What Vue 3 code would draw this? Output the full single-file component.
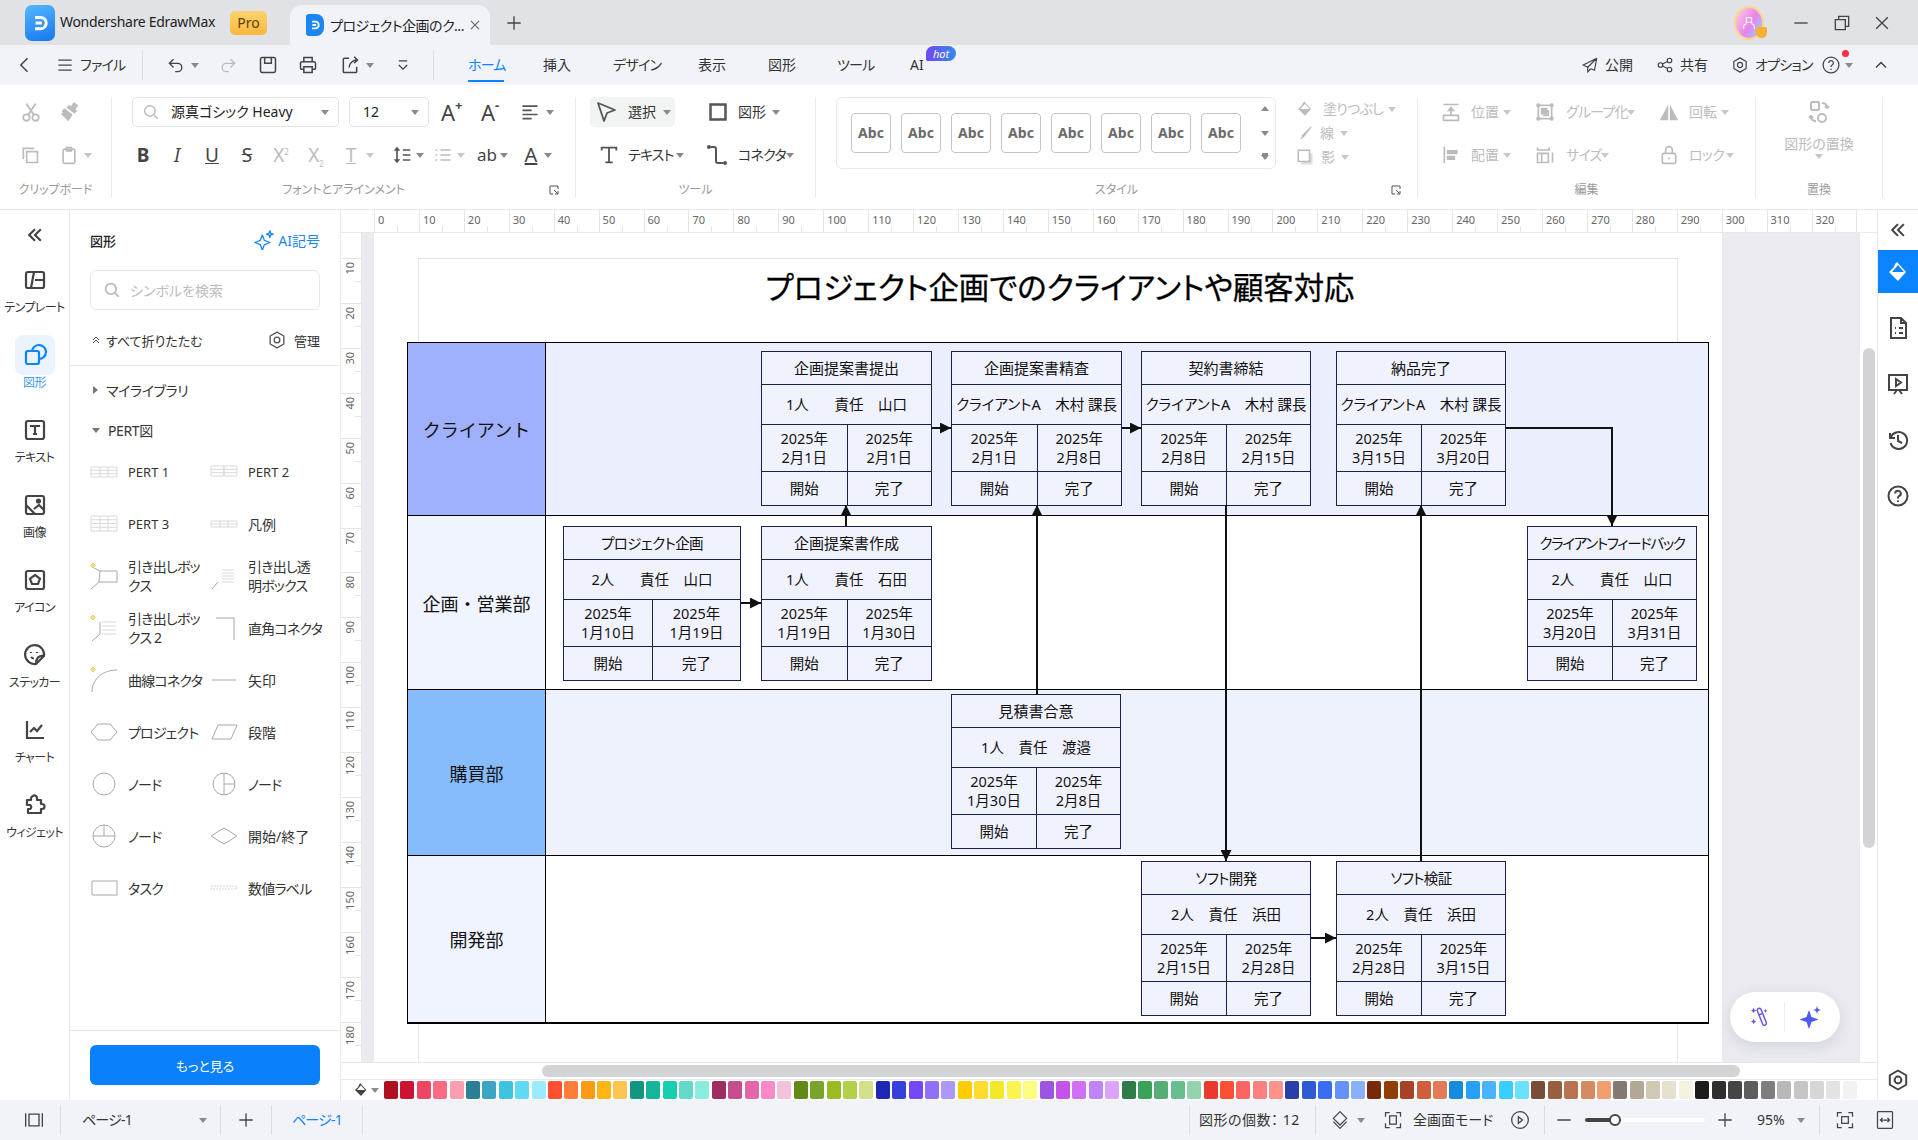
<script setup>
import { h } from 'vue'

// inner markup for the line icons, all on a 24 grid unless a vb is passed
const icons = {
  back: '<path d="M15 4l-8 8 8 8"/>',
  menu: '<path d="M4 6h16M4 12h16M4 18h16"/>',
  undo: '<path d="M9 5L4 10l5 5M4 10h10a5 5 0 0 1 0 10h-3"/>',
  redo: '<path d="M15 5l5 5-5 5M20 10H10a5 5 0 0 0 0 10h3"/>',
  save: '<rect x="3" y="3" width="18" height="18" rx="2"/><path d="M8 3v7h8V3"/>',
  print: '<path d="M7 8V3h10v5M7 17H4a1 1 0 0 1-1-1v-6a2 2 0 0 1 2-2h14a2 2 0 0 1 2 2v6a1 1 0 0 1-1 1h-3M7 14h10v7H7z"/>',
  exp: '<path d="M11 4H5a1 1 0 0 0-1 1v15a1 1 0 0 0 1 1h14a1 1 0 0 0 1-1v-6M11 15c0-5 4-9 10-9M17 2l4 4-4 4"/>',
  more: '<path d="M7 7h10M7 12l5 5 5-5"/>',
  send: '<path d="M21 3L3 12l6 3zM21 3L9 15v6l4-4M21 3l-3 16-5-2"/>',
  share: '<circle cx="6" cy="12" r="3"/><circle cx="18" cy="6" r="3"/><circle cx="18" cy="18" r="3"/><path d="M8.7 10.7l6.6-3.4M8.7 13.3l6.6 3.4"/>',
  gear: '<path stroke-linejoin="round" d="M12 2.5l8.2 4.75v9.5L12 21.5l-8.2-4.75v-9.5z"/><circle cx="12" cy="12" r="3.4"/>',
  help: '<circle cx="12" cy="12" r="9.5"/><path d="M9.2 9.5a2.8 2.8 0 1 1 4.2 2.4c-.9.5-1.4 1-1.4 2v.6M12 16.5v1.5"/>',
  up: '<path d="M6 15l6-6 6 6"/>',
  min: '<path d="M4 12h16"/>',
  restore: '<path d="M8 8V4h12v12h-4M4 8h12v12H4z"/>',
  close: '<path d="M5 5l14 14M19 5L5 19"/>',
  plus: '<path d="M12 4v16M4 12h16"/>',
  cut: '<circle cx="7" cy="18" r="3.5"/><circle cx="17" cy="18" r="3.5"/><path d="M9 15L17 3M15 15L7 3"/>',
  brush: '<path fill="currentColor" stroke="none" d="M16 1l5 4-3 4 2 2-3 3-9-7 3-3 2 2zM6 8l9 7-5 7-8-8 2-1-1-2z"/>',
  copy: '<path d="M8 8h13v13H8zM4 17V4h13"/>',
  paste: '<rect x="5" y="5" width="14" height="17" rx="2"/><path d="M9 3h6v4H9z"/>',
  search: '<circle cx="10.5" cy="10.5" r="7"/><path d="M16 16l5 5"/>',
  align: '<path d="M3 5h18M3 10h11M3 15h18M3 20h11"/>',
  spacing: '<path fill="currentColor" stroke="none" d="M6 2l4 5H2zM6 22l-4-5h8z"/><path d="M6 6v12M13 6h9M13 12h9M13 18h9"/>',
  bullets: '<path d="M9 6h12M9 12h12M9 18h12M3 6h2M3 12h2M3 18h2"/>',
  pointer: '<path stroke-linejoin="round" d="M4 3l17 7-8 3-3 8z"/>',
  rect: '<path d="M3 3h18v18H3z"/>',
  ttext: '<path d="M4 7V4h16v3M12 4v16M8 20h8"/>',
  conn: '<path d="M6 4h3a2 2 0 0 1 2 2v12a2 2 0 0 0 2 2h5"/><circle cx="4" cy="4" r="2" fill="currentColor" stroke="none"/><circle cx="20" cy="20" r="2" fill="currentColor" stroke="none"/>',
  fill: '<path fill="currentColor" stroke="none" d="M11 2l9 10-8 9-9-9 5-5 1-3zM6 12h12l-6-7z"/>',
  pen: '<path fill="currentColor" stroke="none" d="M20 3l1 1-10 13-5 4 2-6z"/>',
  shadow: '<path fill="currentColor" opacity=".5" stroke="none" d="M7 7h15v15H7z"/><path fill="#fff" d="M3 3h15v15H3z"/>',
  pos: '<path d="M3 3h18M3 16h18v6H3zM12 17V7"/><path fill="currentColor" stroke="none" d="M12 5l5 6H7z"/>',
  group: '<rect x="4" y="4" width="16" height="16"/><rect x="8" y="8" width="6" height="6" fill="currentColor"/><rect x="11" y="11" width="5" height="5"/><g fill="currentColor" stroke="none"><circle cx="4" cy="4" r="2.5"/><circle cx="20" cy="4" r="2.5"/><circle cx="4" cy="20" r="2.5"/><circle cx="20" cy="20" r="2.5"/></g>',
  rotate: '<path fill="currentColor" stroke="none" d="M11 3L1 22h10zM13 3l10 19H13z"/>',
  alignl: '<path d="M4 2v20"/><path fill="currentColor" stroke="none" d="M7 6h13v5H7zM7 13h10v5H7z"/>',
  size: '<path d="M3 3v3h14V3M3 10h13v11H3zM8 10v11M21 9v12"/>',
  lock: '<rect x="4" y="10" width="16" height="12" rx="2"/><path d="M8 10V6a4 4 0 0 1 8 0v4"/><path d="M12 15v2"/>',
  replace: '<rect x="4" y="2" width="8" height="8" rx="1"/><circle cx="15" cy="18" r="4"/><path d="M15 3c3 0 5 2 5 5M18 6l2 2 2-2M9 21c-3 0-5-2-5-5M2 18l2-2 2 2"/>',
  launch: '<path d="M10 20H4V4h16v6M12 12l8 8M20 14v6h-6"/>',
  dchev: '<path d="M12 5l-7 7 7 7M19 5l-7 7 7 7"/>',
  dup: '<path d="M6 12l6-6 6 6M6 18l6-6 6 6"/>',
  tpl: '<rect x="3" y="4" width="18" height="16" rx="2"/><path d="M11 4L8 20M12 12h9"/>',
  shapes: '<path d="M9 8a7 7 0 1 1 7 8"/><rect x="3" y="8" width="13" height="13" rx="2"/>',
  textbox: '<rect x="3" y="3" width="18" height="18" rx="2"/><path d="M8 9V8h8v1M12 8v8M10 16h4"/>',
  image: '<rect x="3" y="3" width="18" height="18" rx="2"/><path d="M3 12l9 9M11 16l5-4 5 5"/><circle cx="15.5" cy="8" r="1.5" fill="currentColor"/>',
  iconbox: '<rect x="3" y="3" width="18" height="18" rx="2"/><path d="M12 7l5 3.6-2 5.4H9l-2-5.4z"/>',
  sticker: '<path d="M21 13a9.5 9.5 0 1 0-8 8zM21 13c-5-1-8 2-8 8"/><path d="M8 9v1M14 9v1M8 14c1 1 2 1.500 3 1.500"/>',
  chart: '<path d="M4 3v17h17M7 14l4-4 3 3 5-6"/>',
  puzzle: '<path stroke-linejoin="round" d="M10 3a2.500 2.500 0 0 1 4 2v2h4v4h1a2.500 2.500 0 0 1 0 5h-1v4H5v-4h2a2.200 2.200 0 0 0 0-4H4V7h4V5a3 3 0 0 1 2-2z"/>',
  doc: '<path d="M5 2h10l5 5v15H5zM15 2v5h5M9 12h1M13 12h4M9 17h1M13 17h4"/>',
  present: '<path d="M3 3h18v15H3zM2 3h20M8 22l3-4M16 22l-3-4M10 7l5 3.500-5 3.500z"/>',
  history: '<path d="M4 5v5h5M4.500 10a8.500 8.500 0 1 1 0 5M12 7v6l4 2"/>',
  star: '<path fill="currentColor" stroke="none" d="M11 5l2.500 7 7 2.500-7 2.500L11 24l-2.500-7-7-2.500 7-2.500zM19 1l1 3 3 1-3 1-1 3-1-3-3-1 3-1z"/>',
  staro: '<path stroke-linejoin="round" d="M10 6l2.500 6.500L19 15l-6.500 2.500L10 24l-2.500-6.500L1 15l6.500-2.500zM19 1l1 3 3 1-3 1-1 3-1-3-3-1 3-1z"/>',
  wand: '<path d="M9 5l6 15a2.200 2.200 0 0 0 4-1.500L13 3.500A2.200 2.200 0 0 0 9 5zM10 10l4-1.500"/><path fill="currentColor" stroke="none" d="M5 2l1 2 2 1-2 1-1 2-1-2-2-1 2-1zM5 14l1 2 2 1-2 1-1 2-1-2-2-1 2-1zM18 3l.7 1.500 1.500.7-1.500.7-.7 1.500-.7-1.500-1.500-.7 1.500-.7z"/>',
  panels: '<path d="M2 4v16M22 4v16M6 5h12v14H6z"/>',
  layers: '<path stroke-linejoin="round" d="M12 2l8 8-8 8-8-8zM4 14l8 8 8-8"/>',
  full: '<path d="M3 8V3h5M16 3h5v5M21 16v5h-5M8 21H3v-5"/><rect x="8" y="7" width="8" height="10"/>',
  play: '<circle cx="12" cy="12" r="10"/><path d="M10 8l5 4-5 4z"/>',
  fit: '<path d="M3 8V3h5M16 3h5v5M21 16v5h-5M8 21H3v-5"/><rect x="8" y="8" width="8" height="8"/>',
  width: '<rect x="3" y="2" width="18" height="20" rx="1"/><path d="M7 12h10M9 9.500L6.500 12 9 14.500M15 9.500l2.500 2.500-2.500 2.500"/>',
  person: '<path stroke="#fff" stroke-width="1.600" d="M8 4h8v7H8zM4 21v-3c0-3 2-5 5-5M20 21v-3c0-3-2-5-5-5"/>',
  logo: '<path stroke="#fff" stroke-width="2.400" d="M8 7.500h4.500a4.500 4.500 0 0 1 0 9H8M8.500 12h5"/>'
}

// thumbnails of the shape library, 28 grid
const G1 = '#d9d9d9'
const G2 = '#a8a8a8'
const table = (y1, y2, rows, c) => {
  let d = `M1 ${y1}h26v${y2 - y1}H1z`
  for (let i = 1; i < rows; i++) d += `M1 ${y1 + ((y2 - y1) * i) / rows}h26`
  d += `M${c} ${y1}v${y2 - y1}M${28 - c} ${y1}v${y2 - y1}`
  return `<path stroke="${G1}" d="${d}"/>`
}
const dia = '<path fill="#f6e27a" stroke="#ccb84a" stroke-width=".6" d="M3 1l2.500 2.500L3 6 .5 3.500z"/>'
const thumbs = {
  p1: table(9, 19, 3, 10),
  p2: table(8, 18, 3, 14),
  p3: table(6, 21, 4, 10),
  leg: table(11, 17, 2, 10),
  call: dia + `<path stroke="${G2}" d="M10 9h17v11H9zM9 20l-8 7M10 9l-6-3"/>`,
  callt: `<path stroke="${G1}" d="M12 8h12M12 11h12M12 14h12M12 17h12M12 20h12"/><path stroke="${G2}" d="M8 20l-6 7"/>`,
  call2: dia + `<path stroke="${G1}" d="M12 8h14M12 12h14M12 16h14M12 20h14"/><path stroke="${G2}" d="M10 8v12M10 20l-8 7"/>`,
  right: `<path stroke="${G2}" d="M6 4h18v22"/>`,
  curve: dia + `<path stroke="${G2}" d="M27 4C14 4 2 12 2 26"/>`,
  arrow: `<path stroke="${G2}" d="M2 14h24"/>`,
  hex: `<path stroke="${G2}" d="M8 6h12l7 8-7 8H8l-7-8z"/>`,
  para: `<path stroke="${G2}" d="M8 7h19l-6 14H2z"/>`,
  node: `<circle stroke="${G2}" cx="14" cy="14" r="11"/>`,
  node2: `<circle stroke="${G2}" cx="14" cy="14" r="11"/><path stroke="${G2}" d="M14 3v22M14 14h11"/>`,
  node3: `<circle stroke="${G2}" cx="14" cy="14" r="11"/><path stroke="${G2}" d="M3 14h22M14 3v11"/>`,
  dmd: `<path stroke="${G2}" d="M14 6l13 8-13 8-13-8z"/>`,
  task: `<path stroke="${G2}" d="M2 7h25v14H2z"/>`,
  num: `<path stroke="${G1}" stroke-dasharray="2 1" d="M1 12h26v3H1z"/>`
}

const Ic = (props) =>
  h('svg', {
    class: 'ic',
    viewBox: props.vb || '0 0 24 24',
    fill: 'none',
    stroke: 'currentColor',
    'stroke-width': props.sw || 2,
    innerHTML: props.t ? thumbs[props.t] : icons[props.n],
  })
Ic.props = ['n', 't', 'vb', 'sw']

const leftRail = [
  { n: 'tpl', label: 'テンプレート' },
  { n: 'shapes', label: '図形', active: true },
  { n: 'textbox', label: 'テキスト' },
  { n: 'image', label: '画像' },
  { n: 'iconbox', label: 'アイコン' },
  { n: 'sticker', label: 'ステッカー' },
  { n: 'chart', label: 'チャート' },
  { n: 'puzzle', label: 'ウィジェット' },
]

const shapes = [
  { t: 'p1', label: 'PERT 1' },
  { t: 'p2', label: 'PERT 2' },
  { t: 'p3', label: 'PERT 3' },
  { t: 'leg', label: '凡例', big: true },
  { t: 'call', label: '引き出しボッ\nクス', big: true, k: true },
  { t: 'callt', label: '引き出し透\n明ボックス', big: true, k: true },
  { t: 'call2', label: '引き出しボッ\nクス 2', big: true, k: true },
  { t: 'right', label: '直角コネクタ', big: true, k: true },
  { t: 'curve', label: '曲線コネクタ', big: true, k: true },
  { t: 'arrow', label: '矢印', big: true },
  { t: 'hex', label: 'プロジェクト', big: true, k: true },
  { t: 'para', label: '段階', big: true },
  { t: 'node', label: 'ノード', big: true, k: true },
  { t: 'node2', label: 'ノード', big: true, k: true },
  { t: 'node3', label: 'ノード', big: true, k: true },
  { t: 'dmd', label: '開始/終了', big: true },
  { t: 'task', label: 'タスク', big: true, k: true },
  { t: 'num', label: '数値ラベル', big: true, k: true },
]

const rulerTop = Array.from({ length: 34 }, (_, i) => i * 10)
const rulerLeft = Array.from({ length: 19 }, (_, i) => (i + 1) * 10)

const palette = [
  '#ae1220', '#cc1233', '#ec4662', '#f96a85', '#fc9db0',
  '#2a7f96', '#3aa6c4', '#3ec3e0', '#5fdaf2', '#9cebfd',
  '#fc5030', '#ff7d3a', '#ff9a18', '#ffb615', '#ffc550',
  '#13967f', '#14b59a', '#18cdb0', '#64d9c7', '#88eddc',
  '#9e2d63', '#c84d8d', '#e468a8', '#f989c8', '#f5c2de',
  '#628815', '#78a42a', '#98bc22', '#b2d048', '#d2e08c',
  '#1e28b0', '#3840dc', '#7448f8', '#9070f8', '#ab98fa',
  '#fdcb00', '#fedb2e', '#f2ea28', '#fdf350', '#fdfd80',
  '#9c55e0', '#c454e8', '#d070f4', '#c084f8', '#dca4fc',
  '#2e7d48', '#3aa35a', '#55ae76', '#66bf8c', '#94d4ac',
  '#ea3a2e', '#fd4f34', '#fd6464', '#fd8080', '#fd938a',
  '#2840a8', '#2f5ad6', '#3a6ef2', '#6690fd', '#8ab0fa',
  '#78290a', '#913e05', '#a84224', '#d05f3e', '#e37b58',
  '#158bdc', '#28a0f5', '#4ab2ff', '#3acdff', '#68e2ff',
  '#7a4e35', '#975f40', '#b87350', '#d68a62', '#f49e6e',
  '#857870', '#b3a797', '#cfc8b5', '#e6e0cf', '#f5f3df',
  '#1c1c1c', '#2f2f2f', '#454545', '#5d5d5d', '#7e7e7e',
  '#b8b8b8', '#c6c6c6', '#d6d6d6', '#e3e3e3', '#f2f2f2',
]

const lanes = [
  { name: 'クライアント', cls: 'l1' },
  { name: '企画・営業部', cls: 'l2' },
  { name: '購買部', cls: 'l3' },
  { name: '開発部', cls: 'l4' },
]

// diagram nodes, x/y in page pixels, the table's inner corner is 408,343
const nodes = [
  { x: 761, y: 351, w: 171, title: '企画提案書提出', who: '1人　   責任　山口', a: '2025年\n2月1日', b: '2025年\n2月1日' },
  { x: 951, y: 351, w: 171, title: '企画提案書精査', who: 'クライアントA　木村 課長', a: '2025年\n2月1日', b: '2025年\n2月8日' },
  { x: 1141, y: 351, w: 170, title: '契約書締結', who: 'クライアントA　木村 課長', a: '2025年\n2月8日', b: '2025年\n2月15日' },
  { x: 1336, y: 351, w: 170, title: '納品完了', who: 'クライアントA　木村 課長', a: '2025年\n3月15日', b: '2025年\n3月20日' },
  { x: 563, y: 526, w: 178, title: 'プロジェクト企画', cls: 'tt1', who: '2人　   責任　山口', a: '2025年\n1月10日', b: '2025年\n1月19日' },
  { x: 761, y: 526, w: 171, title: '企画提案書作成', who: '1人　   責任　石田', a: '2025年\n1月19日', b: '2025年\n1月30日' },
  { x: 1527, y: 526, w: 170, title: 'クライアントフィードバック', cls: 'tt2', who: '2人　   責任　山口', a: '2025年\n3月20日', b: '2025年\n3月31日' },
  { x: 951, y: 694, w: 170, title: '見積書合意', who: '1人　責任　渡邉', a: '2025年\n1月30日', b: '2025年\n2月8日' },
  { x: 1141, y: 861, w: 170, title: 'ソフト開発', cls: 'tt1', who: '2人　責任　浜田', a: '2025年\n2月15日', b: '2025年\n2月28日' },
  { x: 1336, y: 861, w: 170, title: 'ソフト検証', cls: 'tt1', who: '2人　責任　浜田', a: '2025年\n2月28日', b: '2025年\n3月15日' },
]

const links = [
  'M932 428H951',
  'M1122 428H1141',
  'M741 603H761',
  'M1311 938H1336',
  'M846 526V505',
  'M1037 694V505',
  'M1226 505V861',
  'M1421 861V505',
  'M1506 428H1612V526',
]
</script>

<template>
  <div class="app">
    <!-- title bar -->
    <header class="titlebar">
      <span class="logo m25"><Ic n="logo" /></span>
      <span class="t w160 m5 appname">Wondershare EdrawMax</span>
      <span class="pro m10">Pro</span>
      <div class="tab m23">
        <span class="tabicon"><Ic n="logo" /></span>
        <span class="tabtext">プロジェクト企画のク...</span>
        <Ic n="close" class="i14 tabx" />
      </div>
      <Ic n="plus" sw="1.600" class="i20 m14 dark" />
      <div class="winctl">
        <div class="avatar"><Ic n="person" class="i16" /><span class="avbadge"></span></div>
        <Ic n="min" sw="1.600" class="i20 m27 dark" />
        <Ic n="restore" sw="1.600" class="i20 m21 dark" />
        <Ic n="close" sw="1.600" class="i20 m20 dark" />
      </div>
    </header>

    <!-- quick access + menu tabs -->
    <nav class="toolbar">
      <Ic n="back" sw="1.800" class="i20 m15 dark" />
      <Ic n="menu" sw="1.500" class="i20 m20 dark" />
      <span class="t k w42 m5">ファイル</span>
      <i class="vline m20"></i>
      <Ic n="undo" sw="1.600" class="i20 m23 dark" />
      <i class="ar m5"></i>
      <Ic n="redo" sw="1.600" class="i20 m19 off" />
      <Ic n="save" sw="1.800" class="i20 m20 dark" />
      <Ic n="print" sw="1.800" class="i20 m20 dark" />
      <Ic n="exp" sw="1.800" class="i20 m22 dark" />
      <i class="ar m6"></i>
      <Ic n="more" sw="1.600" class="i20 m19 dark" />
      <i class="vline m20"></i>
      <span class="t k w34 m34 menu active">ホーム</span>
      <span class="t w29 m41">挿入</span>
      <span class="t k w45 m41">デザイン</span>
      <span class="t w29 m40">表示</span>
      <span class="t w29 m41">図形</span>
      <span class="t k w33 m40">ツール</span>
      <span class="t w13 m40 ai">AI<b class="hot">hot</b></span>
      <div class="tbright">
        <Ic n="send" sw="1.600" class="i18 dark" />
        <span class="t w28 m6">公開</span>
        <Ic n="share" sw="1.600" class="i18 m23 dark" />
        <span class="t w28 m6">共有</span>
        <Ic n="gear" sw="1.600" class="i18 m23 dark" />
        <span class="t k w52 m6">オプション</span>
        <span class="helpwrap m14"><Ic n="help" sw="1.500" class="i20 dark" /><b class="reddot"></b></span>
        <i class="ar m4"></i>
        <Ic n="up" sw="1.800" class="i20 m18 dark" />
      </div>
    </nav>

    <!-- ribbon -->
    <section class="ribbon">
      <div class="grp g1">
        <div class="row off">
          <Ic n="cut" class="i22 m20" />
          <Ic n="brush" class="i22 m17" />
        </div>
        <div class="row off">
          <Ic n="copy" class="i20 m20" />
          <Ic n="paste" class="i20 m19" />
          <i class="ar lt m5"></i>
        </div>
        <div class="glabel">クリップボード</div>
      </div>

      <div class="grp g2">
        <div class="row">
          <div class="select fontsel m20">
            <Ic n="search" class="i18 off" />
            <span class="t m11">源真ゴシック Heavy</span>
            <i class="ar push"></i>
          </div>
          <div class="select sizesel m10"><span class="t">12</span><i class="ar push"></i></div>
          <span class="glyph w20 m12">A<sup>+</sup></span>
          <span class="glyph w20 m20">A<sup>-</sup></span>
          <Ic n="align" class="i20 m19 mid" />
          <i class="ar m6"></i>
        </div>
        <div class="row">
          <b class="fmt m21">B</b>
          <i class="fmt m14">I</i>
          <u class="fmt m15">U</u>
          <s class="fmt m15">S</s>
          <span class="fmt off m14">X<sup>2</sup></span>
          <span class="fmt off m15">X<sub>2</sub></span>
          <span class="fmt off m15 ttt">T</span>
          <i class="ar lt m5"></i>
          <Ic n="spacing" class="i20 m18 mid" />
          <i class="ar m4"></i>
          <Ic n="bullets" class="i20 m9 off" />
          <i class="ar lt m4"></i>
          <span class="fmt w22 m12 ab">ab</span>
          <i class="ar m3"></i>
          <span class="fmt m13 ul">A</span>
          <i class="ar m3"></i>
        </div>
        <div class="glabel">フォントとアラインメント<Ic n="launch" class="i12 launch" /></div>
      </div>

      <div class="grp g3">
        <div class="row">
          <div class="selbtn m14">
            <Ic n="pointer" sw="1.800" class="i24 mid" />
            <span class="t w30 m10">選択</span>
            <i class="ar m5"></i>
          </div>
          <Ic n="rect" sw="3" class="i20 m33 mid" />
          <span class="t w30 m10">図形</span>
          <i class="ar m4"></i>
        </div>
        <div class="row">
          <Ic n="ttext" class="i22 m22 mid" />
          <span class="t k w44 m8">テキスト</span>
          <i class="ar m4"></i>
          <Ic n="conn" class="i24 m21 mid" />
          <span class="t k w44 m9">コネクタ</span>
          <i class="ar m4"></i>
        </div>
        <div class="glabel">ツール</div>
      </div>

      <div class="grp g4">
        <div class="stylerow">
          <div class="stylebox m20">
            <span v-for="n in 8" :key="n" class="abc">Abc</span>
            <div class="stylearrows">
              <i class="ar upw"></i><i class="ar"></i><i class="ar dbl"></i>
            </div>
          </div>
          <div class="fills off">
            <div class="fillrow"><Ic n="fill" class="i18" /><span class="t k w59 m9">塗りつぶし</span><i class="ar lt m6"></i></div>
            <div class="fillrow"><Ic n="pen" class="i18" /><span class="t w14 m6">線</span><i class="ar lt m6"></i></div>
            <div class="fillrow"><Ic n="shadow" class="i18" /><span class="t w14 m7">影</span><i class="ar lt m6"></i></div>
          </div>
        </div>
        <div class="glabel">スタイル<Ic n="launch" class="i12 launch" /></div>
      </div>

      <div class="grp g5">
        <div class="row off">
          <Ic n="pos" class="i20 m23" />
          <span class="t w29 m10">位置</span><i class="ar lt m3"></i>
          <Ic n="group" class="i20 m24" />
          <span class="t k w56 m11">グループ化</span><i class="ar lt m5"></i>
          <Ic n="rotate" class="i20 m24" />
          <span class="t w28 m10">回転</span><i class="ar lt m4"></i>
        </div>
        <div class="row off">
          <Ic n="alignl" class="i20 m23" />
          <span class="t w29 m10">配置</span><i class="ar lt m3"></i>
          <Ic n="size" class="i20 m24" />
          <span class="t k w32 m11">サイズ</span><i class="ar lt m3"></i>
          <Ic n="lock" class="i20 m50" />
          <span class="t k w24 m10">ロック</span><i class="ar lt m13"></i>
        </div>
        <div class="glabel">編集</div>
      </div>

      <div class="grp g6">
        <div class="replace off">
          <Ic n="replace" class="i24" />
          <span class="t">図形の置換</span>
          <i class="ar lt"></i>
        </div>
        <div class="glabel">置換</div>
      </div>
    </section>

    <div class="main">
      <!-- left icon rail -->
      <aside class="rail">
        <div class="railtop"><Ic n="dchev" sw="2.600" class="i20 railicon" /></div>
        <div v-for="item in leftRail" :key="item.label" class="railitem" :class="{ on: item.active }">
          <span class="railbox"><Ic :n="item.n" sw="2.200" class="i24" /></span>
          <span class="raillabel">{{ item.label }}</span>
        </div>
      </aside>

      <!-- shape library -->
      <aside class="panel">
        <div class="panelhead">
          <b class="paneltitle">図形</b>
          <span class="aibtn"><Ic n="staro" sw="1.600" class="i20" />AI記号</span>
        </div>
        <div class="searchbox"><Ic n="search" sw="2.400" class="i18" /><span>シンボルを検索</span></div>
        <div class="collapse">
          <Ic n="dup" class="i12" />
          <span class="m4">すべて折りたたむ</span>
          <span class="manage"><Ic n="gear" sw="1.600" class="i20" /><span class="m7">管理</span></span>
        </div>
        <div class="library">
          <div class="libhead"><i class="tri right"></i>マイライブラリ</div>
          <div class="libhead"><i class="tri"></i>PERT図</div>
          <div class="shapegrid">
            <div v-for="s in shapes" :key="s.t" class="shape">
              <Ic :t="s.t" vb="0 0 28 28" sw="1" class="i28" />
              <span class="shapelabel" :class="{ big: s.big, k: s.k }">{{ s.label }}</span>
            </div>
          </div>
        </div>
        <div class="panelfoot"><button class="morebtn">もっと見る</button></div>
      </aside>

      <div class="work">
        <div class="rulertop">
          <div class="rulercorner"></div>
          <div class="ticks">
            <span v-for="n in rulerTop" :key="n" class="tick">{{ n < 330 ? n : '' }}</span>
          </div>
        </div>

        <div class="middle">
          <div class="rulerleft">
            <span v-for="n in rulerLeft" :key="n" class="ltick"><em v-if="n < 190">{{ n }}</em></span>
          </div>

          <div class="canvas">
            <div class="page">
              <div class="frame">
                <h1 class="doctitle">プロジェクト企画でのクライアントや顧客対応</h1>
              </div>

              <div class="tbl">
                <div v-for="lane in lanes" :key="lane.name" class="lane" :class="lane.cls">
                  <div class="lanename">{{ lane.name }}</div>
                  <div class="lanebody"></div>
                </div>

                <div
                  v-for="n in nodes"
                  :key="n.title"
                  class="node"
                  :style="{ left: n.x - 408 + 'px', top: n.y - 343 + 'px', width: n.w + 'px' }"
                >
                  <div class="ntitle" :class="n.cls">{{ n.title }}</div>
                  <div class="nwho">{{ n.who }}</div>
                  <div class="ngrid ndate">
                    <div>{{ n.a }}</div>
                    <div>{{ n.b }}</div>
                  </div>
                  <div class="ngrid nstat">
                    <div>開始</div>
                    <div>完了</div>
                  </div>
                </div>

                <svg class="links" viewBox="408 343 1300 680">
                  <defs>
                    <marker id="ah" viewBox="0 0 10 10" refX="10" refY="5" markerWidth="11" markerHeight="11" markerUnits="userSpaceOnUse" orient="auto">
                      <path d="M0 0L10 5L0 10z" fill="#111" />
                    </marker>
                  </defs>
                  <path v-for="d in links" :key="d" :d="d" fill="none" stroke="#111" stroke-width="2" marker-end="url(#ah)" />
                </svg>
              </div>
            </div>

            <div class="aipill">
              <Ic n="wand" sw="1.600" class="i22 violet" />
              <i class="pilldiv"></i>
              <Ic n="star" class="i24 violet2" />
            </div>
          </div>

          <div class="vscroll"><span class="vthumb"></span></div>
        </div>

        <div class="hscroll"><span class="hthumb"></span></div>

        <div class="palette">
          <span class="palfill"><Ic n="fill" class="i16" /><i class="ar"></i></span>
          <span v-for="(c, i) in palette" :key="i" class="swatch" :style="{ background: c }"></span>
        </div>
      </div>

      <!-- right rail -->
      <aside class="rrail">
        <div class="rtop"><Ic n="dchev" sw="2.400" class="i20" /></div>
        <div class="ractive"><Ic n="fill" class="i24" /></div>
        <div class="ritem"><Ic n="doc" class="i24" /></div>
        <div class="ritem"><Ic n="present" class="i24" /></div>
        <div class="ritem"><Ic n="history" class="i24" /></div>
        <div class="ritem"><Ic n="help" class="i24" /></div>
        <div class="rgear"><Ic n="gear" class="i24" /></div>
      </aside>
    </div>

    <!-- status bar -->
    <footer class="status">
      <Ic n="panels" sw="1.600" class="i20 m24 dark" />
      <i class="vline m16"></i>
      <span class="t k w116 m21">ページ-1</span>
      <i class="ar m1"></i>
      <i class="vline m13"></i>
      <Ic n="plus" sw="1.600" class="i20 m15 dark" />
      <i class="vline m15"></i>
      <span class="t k w50 m20 blue">ページ-1</span>
      <i class="vline m20"></i>
      <div class="stright">
        <i class="vline"></i>
        <span class="t w107 m9 count">図形の個数： 12</span>
        <i class="vline m9"></i>
        <Ic n="layers" sw="1.500" class="i20 m14 dark" />
        <i class="ar m7"></i>
        <Ic n="full" sw="1.500" class="i20 m18 dark" />
        <span class="t w82 m10">全画面モード</span>
        <Ic n="play" sw="1.500" class="i20 m15 dark" />
        <i class="vline m14"></i>
        <Ic n="min" sw="1.800" class="i20 m9 dark" />
        <div class="slider m11"><span class="sfill"></span><span class="sknob"></span></div>
        <Ic n="plus" sw="1.600" class="i20 m10 dark" />
        <span class="t w29 m22">95%</span>
        <i class="ar m11"></i>
        <i class="vline m14"></i>
        <Ic n="fit" sw="1.500" class="i20 m15 dark" />
        <Ic n="width" sw="1.500" class="i20 m20 dark" />
      </div>
    </footer>
  </div>
</template>

<style>
html,
body {
  margin: 0;
  background: #fff;
}
</style>

<style scoped>
.app {
  width: 1918px;
  height: 1140px;
  display: flex;
  flex-direction: column;
  overflow: hidden;
  font-family: "Noto Sans", "Noto Sans CJK JP", sans-serif;
  font-size: 13px;
  font-feature-settings: "palt";
  color: #333;
  background: #fff;
}

.ic { flex: none; display: block; }
.i12 { width: 12px; height: 12px; }
.i14 { width: 14px; height: 14px; }
.i16 { width: 16px; height: 16px; }
.i18 { width: 18px; height: 18px; }
.i20 { width: 20px; height: 20px; }
.i22 { width: 22px; height: 22px; }
.i24 { width: 24px; height: 24px; }
.i28 { width: 28px; height: 28px; }
.dark { color: #444; }
.mid { color: #555; }
.off { color: #bcbcbc; }
.blue { color: #0a84ff; }

.t { flex: none; white-space: nowrap; font-size: 14px; padding-bottom: 2px; }
.k { letter-spacing: -0.8px; }
.count { letter-spacing: 0.5px; }
.w13 { width: 13px; } .w14 { width: 14px; } .w20 { width: 20px; } .w22 { width: 22px; }
.w24 { width: 24px; } .w28 { width: 28px; } .w29 { width: 29px; } .w30 { width: 30px; }
.w32 { width: 32px; } .w33 { width: 33px; } .w34 { width: 34px; } .w42 { width: 42px; }
.w44 { width: 44px; } .w45 { width: 45px; } .w50 { width: 50px; } .w52 { width: 52px; }
.w56 { width: 56px; } .w59 { width: 59px; } .w82 { width: 82px; } .w107 { width: 107px; }
.w116 { width: 116px; } .w160 { width: 160px; }

.m1 { margin-left: 1px; } .m3 { margin-left: 3px; } .m4 { margin-left: 4px; } .m5 { margin-left: 5px; }
.m6 { margin-left: 6px; } .m7 { margin-left: 7px; } .m8 { margin-left: 8px; } .m9 { margin-left: 9px; }
.m10 { margin-left: 10px; } .m11 { margin-left: 11px; } .m12 { margin-left: 12px; } .m13 { margin-left: 13px; }
.m14 { margin-left: 14px; } .m15 { margin-left: 15px; } .m16 { margin-left: 16px; } .m17 { margin-left: 17px; }
.m18 { margin-left: 18px; } .m19 { margin-left: 19px; } .m20 { margin-left: 20px; } .m21 { margin-left: 21px; }
.m22 { margin-left: 22px; } .m23 { margin-left: 23px; } .m24 { margin-left: 24px; } .m25 { margin-left: 25px; }
.m27 { margin-left: 27px; } .m33 { margin-left: 33px; } .m34 { margin-left: 34px; } .m40 { margin-left: 40px; }
.m41 { margin-left: 41px; } .m50 { margin-left: 50px; }

.ar {
  flex: none;
  display: block;
  width: 0;
  height: 0;
  border-left: 4px solid transparent;
  border-right: 4px solid transparent;
  border-top: 5px solid #8a8a8a;
}
.ar.lt { border-top-color: #c8c8c8; }
.vline { flex: none; display: block; width: 1px; height: 30px; background: #dcdde2; }

/* title bar */
.titlebar {
  height: 45px;
  flex: none;
  display: flex;
  align-items: center;
  background: #e0e2e6;
}
.logo {
  width: 30px;
  height: 36px;
  flex: none;
  border-radius: 7px;
  color: #fff;
  background: linear-gradient(160deg, #55b8ff, #1676ee);
  display: flex;
  align-items: center;
  justify-content: center;
}
.logo .ic { width: 30px; height: 30px; }
.appname { color: #222; letter-spacing: -0.3px; }
.pro {
  width: 37px;
  height: 24px;
  flex: none;
  border-radius: 5px;
  background: linear-gradient(180deg, #ffd36f, #fbb73c);
  color: #5d3d06;
  font-size: 14px;
  line-height: 24px;
  text-align: center;
}
.tab {
  width: 200px;
  height: 40px;
  flex: none;
  align-self: flex-end;
  display: flex;
  align-items: center;
  background: #f1f3f9;
  border-radius: 12px 12px 0 0;
}
.tabicon {
  width: 18px;
  height: 22px;
  margin-left: 16px;
  flex: none;
  border-radius: 3px 8px 8px 3px;
  background: #1a86f2;
  display: flex;
  align-items: center;
  justify-content: center;
}
.tabicon .ic { width: 18px; height: 18px; }
.tabtext { margin-left: 6px; width: 136px; white-space: nowrap; font-size: 14px; letter-spacing: -0.5px; color: #222; }
.tabx { margin-left: 2px; color: #666; }
.winctl {
  margin-left: auto;
  padding-right: 26px;
  display: flex;
  align-items: center;
}
.avatar {
  position: relative;
  width: 30px;
  height: 34px;
  box-sizing: border-box;
  border: 2px solid #ffd58a;
  border-radius: 50%;
  background: linear-gradient(120deg, #f7c3e0 10%, #e884ec 55%, #8fdcf7);
  display: flex;
  align-items: center;
  justify-content: center;
}
.avbadge {
  position: absolute;
  right: -5px;
  bottom: 0;
  width: 11px;
  height: 11px;
  border-radius: 2px 2px 6px 6px;
  background: #f8b030;
}

/* toolbar */
.toolbar {
  height: 40px;
  flex: none;
  display: flex;
  align-items: center;
  background: #f1f3f9;
  color: #333;
}
.menu.active { position: relative; color: #0a84ff; }
.menu.active::after {
  content: "";
  position: absolute;
  left: 0;
  right: -2px;
  top: 26px;
  height: 2px;
  background: #0a84ff;
}
.ai { position: relative; }
.hot {
  position: absolute;
  left: 16px;
  top: -9px;
  width: 30px;
  height: 15px;
  border-radius: 8px 8px 8px 2px;
  background: linear-gradient(90deg, #7346f5, #2f8cf0);
  color: #fff;
  font: italic 400 11px/15px "Noto Sans", sans-serif;
  letter-spacing: 0;
  text-align: center;
}
.tbright {
  margin-left: auto;
  padding-right: 27px;
  display: flex;
  align-items: center;
}
.helpwrap { position: relative; flex: none; display: block; }
.reddot {
  position: absolute;
  right: -8px;
  top: -5px;
  width: 7px;
  height: 7px;
  border-radius: 50%;
  background: #f5333f;
}

/* ribbon */
.ribbon {
  height: 125px;
  flex: none;
  box-sizing: border-box;
  display: flex;
  padding-top: 12px;
  border-bottom: 1px solid #e8e8e8;
}
.grp {
  height: 101px;
  flex: none;
  box-sizing: border-box;
  display: flex;
  flex-direction: column;
  border-right: 1px solid #ececec;
}
.g1 { width: 112px; }
.g2 { width: 464px; }
.g3 { width: 240px; }
.g4 { width: 602px; }
.g5 { width: 338px; }
.g6 { width: 127px; }
.row {
  height: 30px;
  flex: none;
  display: flex;
  align-items: center;
}
.row + .row { margin-top: 13px; }
.glabel {
  position: relative;
  height: 16px;
  margin-top: 12px;
  flex: none;
  text-align: center;
  font-size: 12px;
  line-height: 16px;
  color: #9a9a9a;
}
.launch { position: absolute; right: 15px; top: 2px; color: #555; }
.select {
  height: 30px;
  box-sizing: border-box;
  flex: none;
  display: flex;
  align-items: center;
  border: 1px solid #e3e3e3;
  border-radius: 5px;
  padding: 0 9px;
}
.fontsel { width: 207px; color: #222; }
.sizesel { width: 80px; color: #222; padding-left: 13px; }
.push { margin-left: auto; }
.glyph { flex: none; font-size: 22px; line-height: 30px; color: #444; position: relative; }
.glyph sup { position: absolute; top: -7px; left: 14px; font-size: 13px; font-weight: 700; }
.fmt {
  flex: none;
  width: 20px;
  text-align: center;
  font-size: 19px;
  line-height: 30px;
  color: #444;
}
.fmt sup, .fmt sub { font-size: 8px; line-height: 0; }
.fmt.off { color: #bcbcbc; }
.ttt { text-decoration: underline; }
.ab { font-size: 17px; }
.ul { text-decoration: underline; text-decoration-thickness: 2px; font-size: 20px; }
.selbtn {
  width: 85px;
  height: 30px;
  flex: none;
  display: flex;
  align-items: center;
  box-sizing: border-box;
  padding-left: 4px;
  border-radius: 5px;
  background: #f2f3f3;
}
.stylerow { display: flex; height: 73px; flex: none; }
.stylebox {
  width: 440px;
  height: 72px;
  flex: none;
  box-sizing: border-box;
  border: 1px solid #e8e8e8;
  border-radius: 6px;
  display: flex;
  align-items: center;
  padding-left: 14px;
  gap: 10px;
}
.abc {
  width: 40px;
  height: 40px;
  flex: none;
  box-sizing: border-box;
  border: 1px solid #c4c4c4;
  border-radius: 4px;
  text-align: center;
  font-size: 14px;
  font-weight: 700;
  line-height: 38px;
  color: #6a6a6a;
}
.stylearrows {
  margin-left: 10px;
  height: 54px;
  flex: none;
  display: flex;
  flex-direction: column;
  justify-content: space-between;
  align-items: center;
}
.upw { transform: rotate(180deg); }
.dbl { box-shadow: 0 -3px 0 -1px #8a8a8a; }
.fills { margin-left: 20px; }
.fillrow { height: 24px; display: flex; align-items: center; }
.replace {
  height: 73px;
  flex: none;
  display: flex;
  flex-direction: column;
  align-items: center;
}
.replace .ic { margin-top: 3px; }
.replace .t { margin-top: 11px; line-height: 18px; padding-bottom: 0; }
.replace .ar { margin-top: 1px; }

/* main area */
.main { flex: 1; min-height: 0; display: flex; }

.rail {
  width: 70px;
  flex: none;
  box-sizing: border-box;
  border-right: 1px solid #e8e8e8;
}
.railtop { height: 50px; display: flex; align-items: center; justify-content: center; color: #444; }
.railitem {
  height: 75px;
  display: flex;
  flex-direction: column;
  align-items: center;
}
.railbox {
  width: 40px;
  height: 40px;
  flex: none;
  border-radius: 8px;
  display: flex;
  align-items: center;
  justify-content: center;
  color: #444;
}
.raillabel { font-size: 12px; line-height: 16px; letter-spacing: -0.6px; color: #333; white-space: nowrap; }
.railitem.on .railbox { background: #eaf3ff; color: #0a84ff; }
.railitem.on .raillabel { color: #3a99f5; }

.panel {
  width: 271px;
  flex: none;
  box-sizing: border-box;
  display: flex;
  flex-direction: column;
  border-right: 1px solid #e8e8e8;
}
.panelhead {
  height: 20px;
  margin: 20px 20px 0;
  display: flex;
  align-items: center;
  justify-content: space-between;
}
.paneltitle { font-weight: 500; color: #222; }
.aibtn { display: flex; align-items: center; gap: 4px; color: #1a86f2; font-size: 14px; }
.searchbox {
  height: 40px;
  margin: 20px 20px 0;
  box-sizing: border-box;
  border: 1px solid #e8e8e8;
  border-radius: 6px;
  display: flex;
  align-items: center;
  gap: 9px;
  padding-left: 12px;
  color: #bcbcbc;
  font-size: 14px;
}
.collapse {
  height: 20px;
  margin: 20px 20px 0;
  display: flex;
  align-items: center;
  color: #333;
}
.collapse .ic { color: #555; }
.manage { margin-left: auto; display: flex; align-items: center; }
.library {
  flex: 1;
  min-height: 0;
  margin-top: 15px;
  border-top: 1px solid #e8e8e8;
  padding: 4px 0 0 20px;
}
.libhead {
  height: 40px;
  display: flex;
  align-items: center;
  gap: 8px;
  color: #333;
  font-size: 14px;
  letter-spacing: -0.4px;
}
.tri {
  width: 0;
  height: 0;
  margin-left: 2px;
  border-left: 4px solid transparent;
  border-right: 4px solid transparent;
  border-top: 5px solid #777;
}
.tri.right {
  margin-left: 3px;
  border-top: 4px solid transparent;
  border-bottom: 4px solid transparent;
  border-left: 5px solid #777;
  border-right: 0;
}
.shapegrid {
  display: grid;
  grid-template-columns: 120px 120px;
  grid-auto-rows: 52px;
  margin-top: -4px;
}
.shape { display: flex; align-items: center; }
.shapelabel {
  margin-left: 10px;
  white-space: pre-line;
  line-height: 19px;
  color: #333;
}
.shapelabel.big { font-size: 14px; }
.panelfoot {
  height: 70px;
  flex: none;
  box-sizing: border-box;
  border-top: 1px solid #e8e8e8;
  padding: 14px 20px 0;
}
.morebtn {
  width: 230px;
  height: 40px;
  display: block;
  border: 0;
  border-radius: 6px;
  background: #0a80fb;
  color: #fff;
  font: inherit;
}

.work { flex: 1; min-width: 0; display: flex; flex-direction: column; }
.rulertop {
  height: 23px;
  flex: none;
  box-sizing: border-box;
  display: flex;
  border-bottom: 1px solid #e8e8e8;
}
.rulercorner { width: 33px; flex: none; }
.ticks { width: 1486px; display: flex; overflow: hidden; }
.tick {
  position: relative;
  flex: 0 0 44.93px;
  box-sizing: border-box;
  border-left: 1px solid #e4e4e4;
  padding: 3px 0 0 3px;
  font-size: 11px;
  line-height: 14px;
  color: #666;
}
.tick::after {
  content: "";
  position: absolute;
  left: 22px;
  bottom: 0;
  height: 6px;
  border-left: 1px solid #e4e4e4;
}
.middle { flex: 1; min-height: 0; display: flex; }
.rulerleft {
  width: 21px;
  flex: none;
  box-sizing: border-box;
  overflow: hidden;
  padding-top: 25px;
  border-right: 1px solid #e8e8e8;
}
.ltick {
  position: relative;
  display: block;
  height: 44.93px;
  box-sizing: border-box;
  border-top: 1px solid #e4e4e4;
}
.ltick::after {
  content: "";
  position: absolute;
  right: 0;
  top: 22px;
  width: 6px;
  border-top: 1px solid #e4e4e4;
}
.ltick em {
  position: absolute;
  left: 2px;
  top: 3px;
  writing-mode: vertical-rl;
  transform: rotate(180deg);
  font-style: normal;
  font-size: 11px;
  line-height: 14px;
  color: #666;
}
.canvas {
  position: relative;
  flex: 1;
  min-width: 0;
  overflow: hidden;
  background: #eaeaf0;
}
.page {
  position: relative;
  width: 1348px;
  height: 100%;
  margin-left: 12px;
  box-sizing: border-box;
  padding: 109px 0 0 33px;
  background: #fff;
}
.frame {
  position: absolute;
  left: 44px;
  top: 25px;
  width: 1260px;
  height: 900px;
  box-sizing: border-box;
  border: 1px solid #e4e4e4;
}
.doctitle {
  margin: 8px 0 0;
  padding-left: 24px;
  text-align: center;
  font-size: 30.400px;
  font-weight: 400;
  -webkit-text-stroke: 0.3px #000;
  line-height: 42px;
  color: #000;
}
.tbl {
  position: relative;
  width: 1302px;
  height: 682px;
  box-sizing: border-box;
  display: flex;
  flex-direction: column;
  border: 1px solid #000;
}
.lane { display: flex; flex: none; border-bottom: 1px solid #000; box-sizing: border-box; }
.lane:last-of-type { border-bottom: 0; }
.l1 { height: 173px; }
.l2 { height: 174px; }
.l3 { height: 166px; }
.l4 { height: 167px; }
.lanename {
  width: 138px;
  flex: none;
  box-sizing: border-box;
  border-right: 1px solid #000;
  display: flex;
  align-items: center;
  justify-content: center;
  font-size: 18px;
  font-feature-settings: normal;
  color: #111;
}
.lanebody { flex: 1; }
.l1 .lanename { background: #9fb0fd; }
.l1 .lanebody { background: #ebeffd; }
.l2 .lanename { background: #f0f4fe; }
.l2 .lanebody { background: #fff; }
.l3 .lanename { background: #86bbfc; }
.l3 .lanebody { background: #eef2fd; }
.l4 .lanename { background: #f0f4fe; }
.l4 .lanebody { background: #fff; }

.node {
  position: absolute;
  height: 155px;
  box-sizing: border-box;
  border: 1px solid #1a2050;
  background: #f0f3fe;
  font-size: 14.500px;
  color: #111;
  display: flex;
  flex-direction: column;
  text-align: center;
}
.ntitle {
  height: 33px;
  flex: none;
  box-sizing: border-box;
  border-bottom: 1px solid #1a2050;
  font-size: 15px;
  line-height: 32px;
  white-space: nowrap;
}
.tt1 { font-size: 14.500px; letter-spacing: -0.6px; }
.tt2 { font-size: 14.500px; letter-spacing: -1.300px; }
.nwho {
  height: 40px;
  flex: none;
  box-sizing: border-box;
  border-bottom: 1px solid #1a2050;
  line-height: 39px;
  white-space: pre;
}
.ngrid {
  display: grid;
  grid-template-columns: 1fr 1fr;
  flex: none;
}
.ngrid > div + div { border-left: 1px solid #1a2050; }
.ndate {
  height: 47px;
  box-sizing: border-box;
  border-bottom: 1px solid #1a2050;
  line-height: 19px;
  white-space: pre-line;
}
.ndate > div { padding-top: 4px; }
.nstat { flex: 1; }
.nstat > div { line-height: 32px; }
.links {
  position: absolute;
  left: 0;
  top: 0;
  width: 1300px;
  height: 680px;
  pointer-events: none;
}

.aipill {
  position: absolute;
  left: 1368px;
  top: 759px;
  width: 110px;
  height: 50px;
  border-radius: 25px;
  background: #fff;
  box-shadow: 0 4px 14px rgba(40, 40, 90, 0.12);
  display: flex;
  align-items: center;
  justify-content: center;
  gap: 13px;
}
.pilldiv { width: 1px; height: 30px; background: #eee; }
.violet { color: #6a55f0; }
.violet2 { color: #4d58f5; }

.vscroll { position: relative; width: 17px; flex: none; background: #fff; }
.vthumb {
  position: absolute;
  left: 3px;
  top: 115px;
  width: 12px;
  height: 500px;
  border-radius: 6px;
  background: #d2d3d5;
}
.hscroll {
  position: relative;
  height: 18px;
  flex: none;
  box-sizing: border-box;
  border-top: 1px solid #e8e8e8;
  border-bottom: 1px solid #e8e8e8;
}
.hthumb {
  position: absolute;
  left: 201px;
  top: 2px;
  width: 1198px;
  height: 12px;
  border-radius: 6px;
  background: #d2d3d5;
}
.palette {
  height: 20px;
  flex: none;
  display: flex;
  align-items: center;
}
.palfill {
  width: 43px;
  flex: none;
  display: flex;
  align-items: center;
  gap: 2px;
  padding-left: 12px;
  box-sizing: border-box;
  color: #444;
}
.swatch {
  width: 14px;
  height: 18px;
  flex: none;
  margin-right: 2.400px;
  border-radius: 2px;
}

.rrail {
  width: 41px;
  flex: none;
  box-sizing: border-box;
  border-left: 1px solid #e8e8e8;
  display: flex;
  flex-direction: column;
  color: #444;
}
.rtop { height: 40px; display: flex; align-items: center; justify-content: center; }
.ractive {
  height: 43px;
  margin-bottom: 7px;
  background: #0a84ff;
  color: #fff;
  display: flex;
  align-items: center;
  justify-content: center;
}
.ritem { height: 56px; display: flex; align-items: center; justify-content: center; }
.rgear { margin-top: auto; height: 40px; display: flex; align-items: center; justify-content: center; }

/* status bar */
.status {
  height: 40px;
  flex: none;
  display: flex;
  align-items: center;
  background: #f1f3f9;
}
.stright {
  margin-left: auto;
  padding-right: 23px;
  display: flex;
  align-items: center;
}
.slider {
  position: relative;
  width: 120px;
  height: 4px;
  flex: none;
  border-radius: 2px;
  background: #fff;
}
.sfill {
  position: absolute;
  left: 0;
  top: 0;
  width: 30px;
  height: 4px;
  border-radius: 2px;
  background: #444;
}
.sknob {
  position: absolute;
  left: 24px;
  top: -4px;
  width: 12px;
  height: 12px;
  box-sizing: border-box;
  border: 2px solid #444;
  border-radius: 50%;
  background: #fff;
}
</style>
